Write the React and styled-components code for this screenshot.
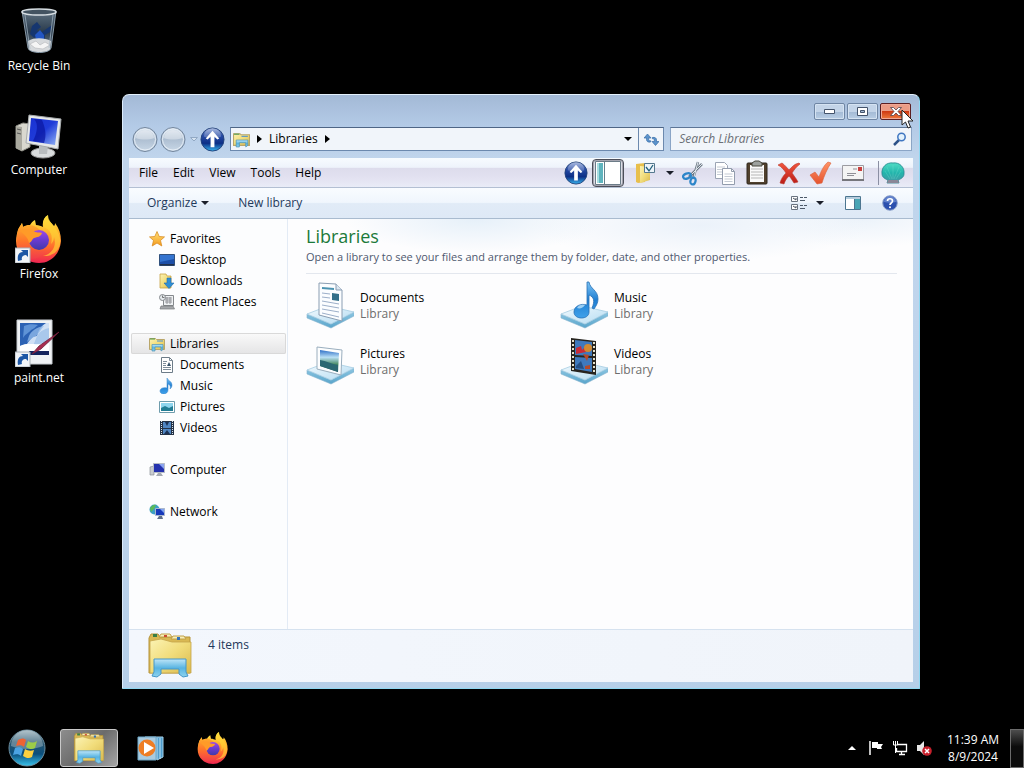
import React from 'react';
import styled, { createGlobalStyle, css } from 'styled-components';

const GlobalStyle = createGlobalStyle`
    * {
        box-sizing: border-box;
    }

    body {
        margin: 0;
        background: #000;
        font-family: "Open Sans", "Noto Sans", sans-serif;
        font-size: 12px;
        line-height: 16px;
        color: #000;
    }

    button, input {
        font: inherit;
        color: inherit;
        border: none;
        background: none;
        padding: 0;
        margin: 0;
    }

    a {
        color: inherit;
        text-decoration: none;
    }

    svg {
        display: block;
        flex: none;
    }
`;

/* ---------- desktop ---------- */

const Desktop = styled.div`
    position: relative;
    display: flex;
    flex-direction: column;
    min-height: 100vh;
    background: #000;
`;

const Shortcuts = styled.nav`
    flex: 1;
    display: flex;
    flex-direction: column;
    align-items: flex-start;
    padding-top: 7px;
    gap: 32px;
`;

const Shortcut = styled.a`
    width: 78px;
    height: 72px;
    display: flex;
    flex-direction: column;
    align-items: center;
    gap: 3px;
    color: #fff;
`;

/* ---------- window frame ---------- */

const Window = styled.main`
    position: absolute;
    inset: 94px 104px 79px 122px;
    display: flex;
    flex-direction: column;
    padding: 0 6px 6px;
    border: 1px solid #e4f1fc;
    border-color: #e4f1fc #8fd8f2 #8fd8f2 #dcebfa;
    border-radius: 7px 7px 1px 1px;
    background: linear-gradient(#a3b9d6, #b3cae6 30px, #c0d5ec 64px, #bfd4ec 300px, #b6cfe8);
`;

const Caption = styled.header`
    flex: none;
    height: 32px;
    display: flex;
    justify-content: flex-end;
    gap: 2px;
    padding: 8px 2px 0 0;
`;

const CaptionButton = styled.button`
    position: relative;
    width: 31px;
    height: 17px;
    display: flex;
    align-items: center;
    justify-content: center;
    border: 1px solid #6f86a4;
    border-radius: 2px;
    box-shadow: inset 0 0 0 1px #d5e3f2;
    background: linear-gradient(#c3d4e8 50%, #a2b9d4 50%, #b9cee5);

    ${({ $close }) => $close && css`
        border-color: #5c1f22;
        box-shadow: inset 0 0 0 1px #f0a795;
        background: linear-gradient(#eb9c86 45%, #d03b14 50%, #ee7b3e);
    `}
`;

const Pointer = styled.svg`
    position: absolute;
    left: 20px;
    top: 5px;
    z-index: 2;
`;

const NavRow = styled.div`
    flex: none;
    height: 31px;
    display: flex;
    align-items: flex-start;
    padding: 0 1px 0 3px;
`;

const RoundButton = styled.button`
    width: 26px;
    height: 25px;
    margin-right: 2px;
`;

const RecentButton = styled.button`
    width: 12px;
    height: 25px;
    display: grid;
    place-items: center;
`;

const AddressBar = styled.div`
    flex: 1;
    height: 24px;
    margin: 0 6px 0 2px;
    display: flex;
    align-items: stretch;
    border: 1px solid #6c89ae;
    border-top-color: #4e6585;
    background: #f1f5fa;
`;

const Crumbs = styled.div`
    flex: 1;
    display: flex;
    align-items: center;
    padding-left: 2px;
    gap: 7px;
`;

const AddressButton = styled.button`
    width: ${({ $wide }) => ($wide ? '25px' : '20px')};
    display: grid;
    place-items: center;
    border-left: ${({ $wide }) => ($wide ? '1px solid #6c89ae' : 'none')};
`;

const SearchBox = styled.label`
    width: 31%;
    height: 24px;
    display: flex;
    align-items: center;
    padding: 0 4px 0 8px;
    border: 1px solid #8ba5c6;
    border-top-color: #5d7596;
    background: #f1f5fa;

    input {
        flex: 1;
        min-width: 0;
        outline: none;
    }

    input::placeholder {
        color: #6b6f76;
        font-style: italic;
        opacity: 1;
    }
`;

/* ---------- bars ---------- */

const MenuBar = styled.div`
    flex: none;
    height: 30px;
    display: flex;
    align-items: center;
    justify-content: space-between;
    padding: 0 4px 0 2px;
    border-bottom: 1px solid #b3bfd3;
    background: linear-gradient(#f7fbff, #eef3fb 32%, #dddcec 36%, #e3e2f1 70%, #e9ecf7);
`;

const Group = styled.div`
    display: flex;
    align-items: center;
    height: 100%;
`;

const MenuButton = styled.button`
    padding: 0 7px 0 8px;
`;

const ToolButton = styled.button`
    width: ${({ $split }) => ($split ? '53px' : '32px')};
    height: 28px;
    display: flex;
    align-items: center;
    justify-content: ${({ $split }) => ($split ? 'space-between' : 'center')};
    padding: ${({ $split }) => ($split ? '0 3px 0 10px' : '0')};

    ${({ $pressed }) => $pressed && css`
        border: 1px solid #4c4e59;
        border-radius: 4px;
        box-shadow: inset 0 0 0 1px #a3a4af;
        background: #dcdde6;
    `}
`;

const Separator = styled.span`
    width: 10px;
    height: 24px;
    margin-right: -2px;
    border-right: 1px solid #8b8fa3;
`;

const CommandBar = styled.div`
    flex: none;
    height: 31px;
    display: flex;
    align-items: center;
    justify-content: space-between;
    padding: 0 15px 0 10px;
    border-bottom: 1px solid #a9bbcf;
    background: linear-gradient(#f9fcff, #f0f6fd 48%, #e1ebf7 52%, #dee9f6);
    color: #1e395b;
`;

const CommandButton = styled.button`
    display: flex;
    align-items: center;
    gap: 4px;
    padding: 0 8px;
    margin-right: 13px;
`;

const IconButton = styled.button`
    display: flex;
    align-items: center;
    gap: 8px;
    margin-left: 21px;
`;

/* ---------- body ---------- */

const Body = styled.div`
    flex: 1;
    min-height: 0;
    display: flex;
    background: #fcfdfe;
`;

const Sidebar = styled.nav`
    flex: none;
    width: 159px;
    display: flex;
    flex-direction: column;
    gap: 21px;
    padding: 9px 1px 0 2px;
    border-right: 1px solid #e3ebf5;
`;

const TreeItem = styled.a`
    height: 21px;
    display: flex;
    align-items: center;
    gap: 5px;
    padding-left: ${({ $child }) => ($child ? '28px' : '18px')};

    ${({ $selected }) => $selected && css`
        border-radius: 2px;
        box-shadow: inset 0 0 0 1px #d9d9d9;
        background: linear-gradient(#fafafa, #e4e4e5);
    `}
`;

const Content = styled.section`
    flex: 1;
    padding: 0 16px 0 18px;
    background:
        radial-gradient(ellipse 130px 34px at 30% 0, #e6f0f9, transparent),
        radial-gradient(ellipse 170px 36px at 66% 6px, #ebf2fa, transparent),
        radial-gradient(ellipse 110px 28px at 92% 0, #ecf3fa, transparent),
        #fdfdfe;
`;

const LibraryHeader = styled.div`
    padding: 5px 0 8px;
    border-bottom: 1px solid #e3e7ee;
    color: #4f596f;

    p {
        margin: 0;
        padding-top: 1px;
        font-size: 11px;
    }
`;

const Title = styled.h1`
    margin: 0;
    font-size: 18px;
    line-height: 24px;
    font-weight: 400;
    color: #1b7a3a;
`;

const LibraryGrid = styled.div`
    display: grid;
    grid-template-columns: repeat(auto-fill, 254px);
    grid-auto-rows: 56px;
    padding-top: 3px;
`;

const LibraryItem = styled.button`
    display: flex;
    align-items: center;
    gap: 6px;
    text-align: left;

    span {
        padding-top: 2px;
    }

    small {
        display: block;
        font-size: 12px;
        color: #6d6d6d;
    }
`;

const Details = styled.footer`
    flex: none;
    height: 53px;
    display: flex;
    gap: 16px;
    padding: 2px 19px;
    border-top: 1px solid #d6e2ef;
    background: linear-gradient(90deg, #f3f7fd, #f0f4fa);
    color: #1e395b;

    p {
        margin: 5px 0 0;
    }
`;

/* ---------- taskbar ---------- */

const Taskbar = styled.footer`
    height: 40px;
    display: flex;
    align-items: center;
    justify-content: space-between;
    color: #fff;
`;

const TaskButton = styled.button`
    width: ${({ $start }) => ($start ? '54px' : '58px')};
    height: 38px;
    margin-right: ${({ $start }) => ($start ? '6px' : '4px')};
    display: grid;
    place-items: center;

    ${({ $active }) => $active && css`
        border: 1px solid #c9c9c9;
        border-radius: 3px;
        background: linear-gradient(135deg, #8d8d8d, #6b6b6b 50%, #a5a5a5);
    `}
`;

const TrayButton = styled.button`
    width: 24px;
    height: 24px;
    display: grid;
    place-items: center;
`;

const Clock = styled.time`
    width: 74px;
    text-align: center;
    line-height: 17px;
`;

const ShowDesktop = styled.button`
    width: 14px;
    height: 39px;
    border: 1px solid #6c6c6c;
    background: linear-gradient(#4d4d4d, #0c0c0c 45%);
`;

/* ---------- icons ---------- */

const Gradient = ({ id, stops, diagonal }) => (
    <linearGradient id={id} x1="0" y1="0" x2={diagonal ? 1 : 0} y2="1">
        {stops.map((color, i) => (
            <stop key={color + i} offset={i / (stops.length - 1)} stopColor={color} />
        ))}
    </linearGradient>
);

const HiddenSvg = styled.svg`
    position: absolute;
`;

const Gradients = () => (
    <HiddenSvg width="0" height="0" aria-hidden="true">
        <defs>
            <Gradient id="folder" stops={['#fbf3b4', '#f1dc7a', '#d9b94e']} diagonal />
            <Gradient id="glass" stops={['#bfe6f8', '#58b4e2', '#8ed3ee']} />
            <Gradient id="flame" stops={['#fff04a', '#ffb52e', '#ff6a2c', '#ee2552']} />
            <Gradient id="flameLeft" stops={['#ffb22c', '#ff762a', '#f23d4a']} />
            <Gradient id="globe" stops={['#a04be8', '#6a3bd0', '#3f3aa8']} />
            <Gradient id="blueBall" stops={['#8fa5d8', '#274ba5', '#0d2f86', '#38b5ef']} />
            <Gradient id="greyBall" stops={['#dbe4ee', '#aebfd2', '#c9d8e7']} />
            <Gradient id="orb" stops={['#9fb4bd', '#28546c', '#0b4f7d', '#38c4ee']} />
            <Gradient id="screen" stops={['#1932d4', '#1f3bd8', '#93b5f6']} diagonal />
            <Gradient id="note" stops={['#7cc4f5', '#1f7ed2', '#3fa1ea']} />
            <Gradient id="tray" stops={['#f3fafe', '#b5dcf2']} diagonal />
            <Gradient id="trayEdge" stops={['#8cc6e2', '#5aa5cb']} />
            <Gradient id="sky" stops={['#2f6fc7', '#b9dff5', '#45875d', '#1e5665']} />
            <Gradient id="bin" stops={['#5f7180', '#2a3b4c', '#71818e']} />
            <Gradient id="star" stops={['#ffe27a', '#f49a1c']} />
            <Gradient id="shell" stops={['#4fdcc4', '#23b5ac', '#4596a4']} />
            <Gradient id="check" stops={['#ff9467', '#e5532e']} />
            <Gradient id="cross" stops={['#f0563f', '#bb1b16']} />
        </defs>
    </HiddenSvg>
);

const Caret = ({ size = 8, color = '#1b1f2a' }) => (
    <svg width={size} height={size / 2} viewBox="0 0 8 4"><path d="M0 0h8L4 4z" fill={color} /></svg>
);

const CrumbArrow = () => (
    <svg width="5" height="8" viewBox="0 0 5 8"><path d="M0 0l5 4-5 4z" fill="#000" /></svg>
);

const ShortcutArrow = () => (
    <g>
        <path d="M0 33h15v15H0z" fill="#f2f5f8" stroke="#a9b1b8" />
        <path d="M3 46c-1-6 1-9 5-9l-2-2h7v7l-2-2c-3 0-5 2-4 5z" fill="#1d57a5" />
    </g>
);

const FirefoxShape = () => (
    <g>
        <path d="M3 15c1-3 3-5 4-7l1 4c2-1 5-2 7-2 2-3 3-4 5-5l1 5c3 0 5 1 7 2C27 7 29 2 33 0c-1 5 3 7 6 11 1-1 1-2 1-3 4 5 6 11 6 18-1 13-10 22-22 22C10 48 1 38 1 26c0-4 1-8 2-11z" fill="url(#flame)" />
        <path d="M3 15c1-3 3-5 4-7l1 4c5-3 9-2 13 0l7 5-4 5-10 2c-1 9 7 15 17 11-4 8-12 10-19 8C3 39 0 25 3 15z" fill="url(#flameLeft)" />
        <circle cx="24" cy="25" r="10" fill="url(#globe)" />
        <path d="M5 16c5-3 9-2 13 0 3 2 7 1 9 2-1 4-5 4-8 5-2 1-2 4-5 5-1-5-4-8-9-12z" fill="#ff9b28" />
        <path d="M29 12c7 3 9 9 7 17 2-2 3-4 3-7 3 9-2 17-11 19 12 1 19-8 17-18C43 12 34 10 33 0c-5 4-6 8-4 12z" fill="#ffd535" opacity=".65" />
    </g>
);

const FirefoxIcon = ({ size = 48, shortcut }) => (
    <svg width={size} height={size} viewBox="0 0 48 48">
        <FirefoxShape />
        {shortcut && <ShortcutArrow />}
    </svg>
);

const RecycleBinIcon = () => (
    <svg width="48" height="48" viewBox="0 0 48 48">
        <path d="M7 4h34l-5 37c-1 6-22 6-23 0z" fill="url(#bin)" stroke="#899aa8" />
        <path d="M17 19l5-4 4 5-4 3 3 5-6 3-4-4zM27 25l10-7-2 7-5 3v8l-7-3z" fill="#16366f" />
        <path d="M20 28l5-5 4 5v7l-7 1z" fill="#2356c4" />
        <path d="M13 34c7-4 17-3 23 0l-1 8c-2 4-19 4-21 0z" fill="#d6d9dc" />
        <path d="M15 37l6-3 4 4 5-3 5 3-7 4-8-1z" fill="#f5f5f5" stroke="#b3b5b8" strokeWidth=".6" />
        <path d="M10 8l5 34M38 8l-4 33" stroke="#a9bac8" opacity=".7" />
        <ellipse cx="24" cy="5" rx="17" ry="3" fill="#435361" stroke="#d6dde2" strokeWidth="1.5" />
    </svg>
);

const ComputerIcon = () => (
    <svg width="48" height="48" viewBox="0 0 48 48">
        <path d="M1 15l7-3 7 1v23l-8 4-6-3z" fill="#d9d8cf" stroke="#8e8e86" />
        <path d="M1 15l6 1v24l-6-3z" fill="#aaa99f" />
        <path d="M2 18l4 1m-4 3l4 1" stroke="#555" />
        <ellipse cx="28" cy="42" rx="12" ry="5" fill="#d9dcdd" stroke="#999" />
        <path d="M24 33l9 2-1 8h-8z" fill="#b8bcbe" />
        <path d="M14 4l32 4-3 30-32-6z" fill="#e7e9e9" stroke="#a7abad" />
        <path d="M16 7l27 3-3 24-26-4z" fill="url(#screen)" />
        <path d="M19 8c5 5 3 14-1 22l11 2c3-8 1-16-2-23z" fill="#0b18a4" opacity=".75" />
    </svg>
);

const PaintIcon = () => (
    <svg width="48" height="48" viewBox="0 0 48 48">
        <path d="M2 1h35v44H2z" fill="#f0f2f4" stroke="#c6cbd0" />
        <path d="M5 4h29v32H5z" fill="#cfe0f5" />
        <path d="M5 4h26c-5 3-8 8-9 13-5 0-8 5-10 8l-7 2z" fill="#2c62b4" />
        <path d="M9 7c5-2 9-2 14-1-3 2-4 4-7 5-2 3-6 4-8 8z" fill="#5f93d6" />
        <path d="M14 17c2-5 8-9 15-10-4 4-5 8-8 10-3 1-6 4-9 6z" fill="#8fb8e8" opacity=".8" />
        <path d="M22 17c4-6 8-7 12-8v13l-16 5z" fill="#a9c8ec" />
        <path d="M5 27c8-4 15 0 29-3v12H5z" fill="#fff" />
        <path d="M14 32h20v4H14z" fill="#15235c" />
        <path d="M44 13L26 30l-9 5 7-8z" fill="#a82c4f" stroke="#70213c" strokeWidth=".8" />
        <ShortcutArrow />
    </svg>
);

const ExplorerIcon = ({ width = 44, height = 46 }) => (
    <svg width={width} height={height} viewBox="0 0 44 46">
        <path d="M1 6l2-4h7l2 3h30v36H1z" fill="#d9b853" stroke="#b59338" />
        <path d="M11 5l2-3h9l2 3zM23 7l2-3h11l2 3z" fill="#f8efb9" stroke="#c0a04a" />
        <path d="M5 2h4v3H5z" fill="#397f46" />
        <path d="M16 3h3v2h-3z" fill="#cc4932" />
        <path d="M29 5h3v3h-3z" fill="#3271b8" />
        <path d="M2 9l11-2 11 3h19v31H2z" fill="url(#folder)" stroke="#c4a349" strokeWidth=".8" />
        <path d="M6 27h32v13l2 4-5 1-4-3v-5H13v5l-4 3-5-1 2-4z" fill="url(#glass)" stroke="#4697c8" />
    </svg>
);

const LibrariesIcon = ({ size = 16 }) => (
    <svg width={size} height={size} viewBox="0 0 16 16">
        <path d="M.5 2.5h6l1 1h8v10H.5z" fill="url(#folder)" stroke="#b9a66a" />
        <path d="M1 3h5" stroke="#4b9a50" />
        <path d="M8 5h6" stroke="#4a90cf" />
        <path d="M3 8.500h11v5l-2 1.500v-4H6v4H3z" fill="url(#glass)" stroke="#4c93b6" strokeWidth=".7" />
    </svg>
);

const UpIcon = ({ size = 25 }) => (
    <svg width={size} height={size} viewBox="0 0 26 26">
        <circle cx="13" cy="13" r="12" fill="url(#blueBall)" stroke="#24437c" />
        <path d="M4 10a9 9 0 0118 0c-5 2-13 2-18 0z" fill="#fff" opacity=".25" />
        <path d="M13 4l7 8-2 1-3-3v11h-4V10l-3 3-2-1z" fill="#fff" />
    </svg>
);

const GreyBall = () => (
    <svg width="26" height="25" viewBox="0 0 26 25">
        <circle cx="13" cy="12.500" r="12" fill="url(#greyBall)" stroke="#72859c" />
        <circle cx="13" cy="12.500" r="10.500" fill="none" stroke="#e6eef6" />
        <path d="M4 11a9 8 0 0118 0c-5 2-13 2-18 0z" fill="#fff" opacity=".35" />
    </svg>
);

const RefreshIcon = () => (
    <svg width="15" height="15" viewBox="0 0 15 15">
        <path d="M0 6l3.500-4L7 6H4.700v1.500c0 1 .8 1.300 2 1.300V10C4 10.500 2.500 9.500 2.500 7.500V6z" fill="#5b93cc" stroke="#3a6ea8" strokeWidth=".7" />
        <path d="M15 9.500l-3.500 4-3.500-4h2.300V8c0-1-.8-1.300-2-1.300V5.500c2.700-.5 4.200.5 4.200 2.500v1.500z" fill="#5b93cc" stroke="#3a6ea8" strokeWidth=".7" />
    </svg>
);

const SearchIcon = () => (
    <svg width="14" height="14" viewBox="0 0 14 14" fill="none">
        <path d="M6 8l-5 5" stroke="#2d5288" strokeWidth="2.500" />
        <circle cx="8.500" cy="5" r="3.700" fill="#e3f2fd" stroke="#3f76c1" strokeWidth="1.500" />
    </svg>
);

const PaneIcon = () => (
    <svg width="26" height="24" viewBox="0 0 26 24">
        <path d="M.5.5h25v23H.5z" fill="#fff" stroke="#6c7c88" />
        <path d="M2 2h6v20H2z" fill="#5fb4be" />
        <path d="M2 2h2v20H2z" fill="#a7dce0" />
        <path d="M9.500 1v22" stroke="#64808c" />
    </svg>
);

const FolderOptionsIcon = () => (
    <svg width="22" height="24" viewBox="0 0 22 24">
        <path d="M2 3l9-1v19l-7 1-2-1z" fill="#e8bf4c" />
        <path d="M6 5l10 1v13L6 22z" fill="url(#folder)" />
        <path d="M10.500 2.500h10v9h-10z" fill="#edf4fa" stroke="#55788e" />
        <path d="M12 6l3 4 4-6" fill="none" stroke="#1f5f7b" strokeWidth="1.300" />
    </svg>
);

const ScissorsIcon = () => (
    <svg width="24" height="26" viewBox="0 0 24 26" fill="none">
        <path d="M8 17L21 4M12 19l5-17" stroke="#6e7a86" strokeWidth="2.500" />
        <path d="M9 16L21 4M13 17l4-15" stroke="#dfe6ec" />
        <ellipse cx="6" cy="16" rx="4" ry="2.500" transform="rotate(-20 6 16)" stroke="#2d86c9" strokeWidth="2.200" />
        <ellipse cx="12" cy="21" rx="2.500" ry="3.500" transform="rotate(15 12 21)" stroke="#2d86c9" strokeWidth="2.200" />
    </svg>
);

const CopyIcon = () => (
    <svg width="22" height="24" viewBox="0 0 22 24">
        <path d="M1.500 1.500h9l3 3v13h-12z" fill="#fff" stroke="#9ba4b4" />
        <path d="M3 6h8M3 8.500h8M3 11h8M3 13.500h8" stroke="#c5cbd5" />
        <path d="M8.500 7.500h9l3 3v13h-12z" fill="#fff" stroke="#929cad" />
        <path d="M17.500 7.500v3h3" fill="none" stroke="#929cad" />
        <path d="M10.500 13h8M10.500 15.500h8M10.500 18h8M10.500 20.500h8" stroke="#c5cbd5" />
    </svg>
);

const ClipboardIcon = () => (
    <svg width="22" height="25" viewBox="0 0 22 25">
        <rect x="1" y="3" width="20" height="21" rx="1" fill="#50402d" stroke="#2e261c" />
        <path d="M4 5h14v17H4z" fill="#fafafa" />
        <path d="M5 9h12M5 12h12M5 15h12M5 18h12" stroke="#b6b6b6" />
        <path d="M6 3l3-2h4l3 2v3H6z" fill="#9da19e" stroke="#48483f" />
    </svg>
);

const DeleteIcon = () => (
    <svg width="24" height="24" viewBox="0 0 24 24">
        <path d="M1 4l4-2c3 2 5 5 7 7 3-3 5-6 10-7l1 1c-4 3-6 6-8 9 2 3 4 5 6 9l-4 1c-2-3-3-5-5-7-3 3-4 5-5 8l-4-1c1-4 3-7 6-10-2-3-4-6-8-8z" fill="url(#cross)" stroke="#b93a2e" strokeWidth=".6" />
    </svg>
);

const CheckIcon = () => (
    <svg width="24" height="24" viewBox="0 0 24 24">
        <path d="M1 14l5-3 4 5c2-6 5-12 9-15l3 1c-4 6-7 13-9 20l-5 1z" fill="url(#check)" stroke="#d9623c" strokeWidth=".6" />
    </svg>
);

const MailIcon = () => (
    <svg width="24" height="20" viewBox="0 0 24 20">
        <path d="M1.500 2.500h21v14h-21z" fill="#f4f4f4" stroke="#9c9ca2" />
        <path d="M1 17h22" stroke="#76767c" strokeWidth="2" />
        <path d="M17 4h4v4h-4z" fill="#c8413f" />
        <path d="M6 10.500h9M6 12.500h7M12 6h4" stroke="#8f8f96" />
    </svg>
);

const ShellIcon = () => (
    <svg width="24" height="22" viewBox="0 0 24 22">
        <path d="M12 1C18 0 24 5 23 12c0 3-3 5-6 6l1 3H6l1-3c-3-1-6-3-6-6C0 5 6 0 12 1z" fill="url(#shell)" stroke="#2b8791" strokeWidth=".8" />
        <path d="M12 17V3M11 17L6 5M13 17l5-12M9 17L4 9M15 17l5-8" stroke="#8beddc" strokeWidth=".7" opacity=".35" />
        <path d="M7 18h10l1 3H6z" fill="#8a8797" />
    </svg>
);

const ViewIcon = () => (
    <svg width="17" height="16" viewBox="0 0 17 16">
        <path d="M.5 1.500h6v5h-6zM.5 9.500h6v5h-6z" fill="#fff" stroke="#68727f" />
        <path d="M2 3l3 2M2 11l3 2M5 3v2M5 11v2" stroke="#46505e" />
        <path d="M9 2.500h3m1 0h3M9 5.500h5M9 10.500h3m1 0h3M9 13.500h5" stroke="#4d5968" />
    </svg>
);

const PreviewIcon = () => (
    <svg width="16" height="14" viewBox="0 0 16 14">
        <path d="M.5.5h15v13H.5z" fill="#fff" stroke="#4d7690" />
        <path d="M1 1h14v2H1z" fill="#b6cddd" />
        <path d="M10 3h5v10h-5z" fill="#4ba6b5" />
        <path d="M9.500 3v10" stroke="#4d7690" />
    </svg>
);

const HelpIcon = () => (
    <svg width="16" height="16" viewBox="0 0 16 16">
        <circle cx="8" cy="8" r="7.300" fill="#2c50ae" stroke="#8fa3cb" />
        <path d="M2 7a6 6 0 0112 0c-4 1-8 1-12 0z" fill="#7895d7" opacity=".7" />
        <path d="M5.500 6c0-3 5-3 5 0 0 2-2.500 2-2.500 4" fill="none" stroke="#fff" strokeWidth="1.700" />
        <circle cx="8" cy="12.300" r="1" fill="#fff" />
    </svg>
);

// 16px drawings of the navigation tree
const smallIcons = {
    star: (
        <path d="M8 .5l2.200 5 5.300.4-4 3.600 1.300 5.500L8 12l-4.800 3 1.300-5.500-4-3.600 5.300-.4z" fill="url(#star)" stroke="#d98e26" strokeWidth=".8" />
    ),
    desktop: (
        <>
            <path d="M.5 2.500h15v11H.5z" fill="#1d4fa8" stroke="#31517d" />
            <path d="M1 3h14v4L1 10z" fill="#3474cf" />
            <path d="M1 12h14v1.500H1z" fill="#23324d" />
        </>
    ),
    downloads: (
        <>
            <path d="M1 1h6l1 2h4v12H1z" fill="url(#folder)" stroke="#c8a245" strokeWidth=".8" />
            <path d="M8 5h4v5h3l-5 5.500L5 10h3z" fill="#2e8fd6" stroke="#216ba7" strokeWidth=".6" />
        </>
    ),
    recent: (
        <>
            <path d="M4.500 1.500h10v10h-10z" fill="#eef1f3" stroke="#85898d" />
            <path d="M6 4h7M6 6h7M6 8h7M8 3v7M11 3v7" stroke="#83878c" strokeWidth=".8" />
            <path d="M2 12h12l1.500 3H1z" fill="#a5a8ab" stroke="#77797c" strokeWidth=".7" />
            <circle cx="3.500" cy="3.500" r="3" fill="#e5eaed" stroke="#85898d" />
            <path d="M3.500 1.500v2h2" fill="none" stroke="#555" strokeWidth=".8" />
        </>
    ),
    documents: (
        <>
            <path d="M2.500.5h8l3 3v12h-11z" fill="#fff" stroke="#6d7c88" />
            <path d="M10.500.5v3h3M4 4.500h4M4 6.500h3M4 8.500h3M4 10.500h8M4 12.500h8" fill="none" stroke="#7e8d99" />
            <path d="M8 9l2-4 2 4z" fill="#38536b" />
        </>
    ),
    music: (
        <path d="M8 0c1 3 5 3 5 7 0 2-1 3-2 4 1-3 0-4-2-5v6c0 5-8 5-8 1 0-3 4-4 7-3z" fill="url(#note)" stroke="#3885c8" strokeWidth=".5" />
    ),
    pictures: (
        <>
            <path d="M.5 2.500h15v11H.5z" fill="#fff" stroke="#6e9cac" />
            <path d="M2 4h12v8H2z" fill="#8fd5ee" />
            <path d="M2 9l4-2 4 2 4-2v5H2z" fill="#227d94" />
        </>
    ),
    videos: (
        <>
            <path d="M1 1h14v14H1z" fill="#253347" />
            <path d="M4 2h8v6H4zM4 9h8v5H4z" fill="#5086c2" />
            <path d="M2.500 1v14M13.500 1v14" stroke="#d9e2e9" strokeDasharray="1 1" />
            <path d="M6 2l2 4 2-4M5 14l3-4 3 4" fill="#1c3153" />
        </>
    ),
    computer: (
        <>
            <path d="M1 5l4-1v9H1z" fill="#c9ccd0" stroke="#8b9098" strokeWidth=".7" />
            <path d="M4.500 1.500h11v9h-11z" fill="#2432ae" stroke="#b6bcc6" />
            <path d="M10 2h5v5z" fill="#8aa3f0" />
            <path d="M9 11h3l2 3H7z" fill="#a5aab2" />
        </>
    ),
    network: (
        <>
            <circle cx="5.500" cy="5.500" r="5" fill="#3d9fc4" />
            <path d="M1 4c2-3 5-4 6-3L5 5 2 8z" fill="#5bba58" />
            <path d="M6.500 4.500h9v7h-9z" fill="#1638ba" stroke="#aab7cd" />
            <path d="M11 5h4v4z" fill="#7fa2f0" />
            <path d="M10 12h3l1 3H8z" fill="#5f6f88" />
        </>
    ),
};

const SmallIcon = ({ name }) => (
    <svg width="16" height="16" viewBox="0 0 16 16">{smallIcons[name]}</svg>
);

// what stands on the blue tray of each library
const libraryArt = {
    documents: (
        <>
            <path d="M13 2l17 1 6 6v31l-23-6z" fill="#fbfdff" stroke="#8a9db2" />
            <path d="M30 3v6h6" fill="#dbe6f0" stroke="#8a9db2" />
            <path d="M16 7l12 1" stroke="#4c93b1" strokeWidth="2" />
            <path d="M16 12l8 1M16 16l8 1M16 20l17 3M16 24l17 3M16 28l17 3M16 32l17 4" stroke="#9cafc9" />
            <path d="M26 12l7 1v7l-7-1z" fill="#34708a" />
        </>
    ),
    music: (
        <>
            <path d="M27 1h2c1 7 9 8 9 17 0 4-2 7-4 10l-2-1c3-7 2-11-3-13v17c0 8-15 8-15 0 0-6 7-9 13-7z" fill="url(#note)" stroke="#2870b4" strokeWidth=".8" />
            <path d="M17 27c1-3 5-4 8-3-2 3-5 4-8 3z" fill="#b8e0fa" opacity=".8" />
        </>
    ),
    pictures: (
        <>
            <path d="M11 10l25 3-1 25-24-6z" fill="#fcfdfe" stroke="#9aaebe" />
            <path d="M14 13l19 3-1 19-18-6z" fill="url(#sky)" />
            <path d="M14 23c6 1 12 4 18 5v7l-18-6z" fill="#2c6872" />
        </>
    ),
    videos: (
        <>
            <path d="M11 1l25 3v34l-25-4z" fill="#27241f" />
            <path d="M15 3l17 2v14l-17-1zM15 20l17 1v14l-17-3z" fill="#3f79bd" />
            <path d="M16 11l5-2 1 4 3-3 1 5-10 2z" fill="#c92b37" />
            <circle cx="28" cy="11" r="4" fill="#d28a31" />
            <path d="M23 17l6 1-2 6zM25 29l5-1v4h-5z" fill="#b64a2a" />
            <path d="M16 29l5-5 3 8-8-1z" fill="#254f84" />
            <path d="M13 3v31M34 5v32" stroke="#e6e3cf" strokeWidth="2" strokeDasharray="2 2" />
        </>
    ),
};

const LibraryIcon = ({ name }) => (
    <svg width="48" height="48" viewBox="0 0 48 48">
        <path d="M1 33v4l24 10 23-12v-4L25 43z" fill="url(#trayEdge)" stroke="#86b4ce" strokeWidth=".6" />
        <path d="M1 33l21-8 26 6-23 12z" fill="url(#tray)" stroke="#a6cde2" strokeWidth=".8" />
        {libraryArt[name]}
    </svg>
);

const StartOrb = () => (
    <svg width="38" height="38" viewBox="0 0 38 38">
        <circle cx="19" cy="19" r="18" fill="url(#orb)" stroke="#6d8e9f" />
        <path d="M3 17a16 16 0 0132 0c-9 4-23 4-32 0z" fill="#d9e6ea" opacity=".35" />
        <path d="M10 11c3-2 6-2 8 0l-2 7c-2-2-5-2-8-1z" fill="#ee6333" />
        <path d="M20 12c3 2 6 2 9 0l-2 7c-3 2-6 1-9-1z" fill="#9ccc48" />
        <path d="M7 19c3-1 6-1 8 1l-2 7c-2-2-5-2-8-1z" fill="#4ba3e3" />
        <path d="M17 20c3 2 6 2 9 1l-2 7c-3 2-6 1-9-1z" fill="#fbd03f" />
    </svg>
);

const MediaPlayerIcon = () => (
    <svg width="28" height="28" viewBox="0 0 28 28">
        <path d="M8 3h18v20l-6 3z" fill="#4f9ccc" stroke="#a6d3eb" />
        <path d="M23 4v21M20 4v21" stroke="#bfe2f3" />
        <path d="M1 3h18v23H1z" fill="#a9cbe0" stroke="#6fa9ca" />
        <circle cx="10" cy="14" r="8.500" fill="#ee7d24" />
        <path d="M7 8l10 6-10 6z" fill="#fff" />
    </svg>
);

const FlagIcon = () => (
    <svg width="16" height="16" viewBox="0 0 16 16">
        <path d="M2 1v14" stroke="#fff" strokeWidth="1.500" />
        <path d="M4 2h6v2h5l-2 3 1 2H9V8H4z" fill="#fff" />
    </svg>
);

const NetworkIcon = () => (
    <svg width="16" height="16" viewBox="0 0 16 16" fill="none" stroke="#fff">
        <path d="M5 4.500h9.500v7H4.500V8M7 14.500h6M9.500 12v2" strokeWidth="1.300" />
        <path d="M1.500 1v4h4V1M3.500 1v12" />
    </svg>
);

const MutedIcon = () => (
    <svg width="16" height="16" viewBox="0 0 16 16">
        <path d="M1 5h3l4-4v14l-4-4H1z" fill="#e8e8e8" />
        <circle cx="11" cy="11" r="4.800" fill="#c8202c" />
        <path d="M9 9l4 4m0-4l-4 4" stroke="#fff" strokeWidth="1.500" />
    </svg>
);

/* ---------- data ---------- */

const shortcuts = [
    { label: 'Recycle Bin', icon: <RecycleBinIcon /> },
    { label: 'Computer', icon: <ComputerIcon /> },
    { label: 'Firefox', icon: <FirefoxIcon shortcut /> },
    { label: 'paint.net', icon: <PaintIcon /> },
];

const tree = [
    {
        label: 'Favorites',
        icon: 'star',
        children: [
            { label: 'Desktop', icon: 'desktop' },
            { label: 'Downloads', icon: 'downloads' },
            { label: 'Recent Places', icon: 'recent' },
        ],
    },
    {
        label: 'Libraries',
        selected: true,
        children: [
            { label: 'Documents', icon: 'documents' },
            { label: 'Music', icon: 'music' },
            { label: 'Pictures', icon: 'pictures' },
            { label: 'Videos', icon: 'videos' },
        ],
    },
    { label: 'Computer', icon: 'computer', children: [] },
    { label: 'Network', icon: 'network', children: [] },
];

const tools = [
    { label: 'Cut', icon: <ScissorsIcon /> },
    { label: 'Copy', icon: <CopyIcon /> },
    { label: 'Paste', icon: <ClipboardIcon /> },
    { label: 'Delete', icon: <DeleteIcon /> },
    { label: 'Rename', icon: <CheckIcon /> },
    { label: 'Email', icon: <MailIcon /> },
];

const libraries = ['Documents', 'Music', 'Pictures', 'Videos'];

/* ---------- parts ---------- */

const TitleBar = () => (
    <Caption>
        <CaptionButton aria-label="Minimize">
            <svg width="11" height="5" viewBox="0 0 11 5"><path d="M.5.5h10v4H.5z" fill="#fff" stroke="#43536b" /></svg>
        </CaptionButton>
        <CaptionButton aria-label="Maximize">
            <svg width="11" height="9" viewBox="0 0 11 9">
                <path d="M.5.5h10v8H.5z" fill="#fff" stroke="#43536b" />
                <path d="M3.500 3.500h4v2h-4z" fill="#a2b9d4" stroke="#43536b" />
            </svg>
        </CaptionButton>
        <CaptionButton $close aria-label="Close">
            <svg width="12" height="9" viewBox="0 0 12 9">
                <path d="M.5.5h3L6 3 8.500.5h3L8 4.500l3.500 4h-3L6 6 3.500 8.500h-3l3.500-4z" fill="#fff" stroke="#53434b" strokeWidth=".8" />
            </svg>
            <Pointer width="13" height="20" viewBox="0 0 13 20">
                <path d="M1 1v15l3.500-3 2.500 6 2.500-1L7 12h5z" fill="#fff" stroke="#222" />
            </Pointer>
        </CaptionButton>
    </Caption>
);

const Navigation = () => (
    <NavRow>
        <RoundButton aria-label="Back"><GreyBall /></RoundButton>
        <RoundButton aria-label="Forward"><GreyBall /></RoundButton>
        <RecentButton aria-label="Recent pages">
            <svg width="8" height="5" viewBox="0 0 8 5"><path d="M.5.5h7L4 4z" fill="#d5e3f1" stroke="#92a9c4" /></svg>
        </RecentButton>
        <RoundButton aria-label="Up"><UpIcon /></RoundButton>
        <AddressBar>
            <Crumbs>
                <LibrariesIcon size={17} />
                <CrumbArrow />
                <button>Libraries</button>
                <CrumbArrow />
            </Crumbs>
            <AddressButton aria-label="Previous locations"><Caret color="#000" /></AddressButton>
            <AddressButton $wide aria-label="Refresh"><RefreshIcon /></AddressButton>
        </AddressBar>
        <SearchBox>
            <input type="text" placeholder="Search Libraries" aria-label="Search Libraries" />
            <SearchIcon />
        </SearchBox>
    </NavRow>
);

const Menu = () => (
    <MenuBar>
        <Group>
            {['File', 'Edit', 'View', 'Tools', 'Help'].map(label => (
                <MenuButton key={label}>{label}</MenuButton>
            ))}
        </Group>
        <Group>
            <ToolButton aria-label="Up"><UpIcon size={24} /></ToolButton>
            <ToolButton $pressed aria-label="Navigation pane"><PaneIcon /></ToolButton>
            <ToolButton $split aria-label="Folder options"><FolderOptionsIcon /><Caret /></ToolButton>
            {tools.map(tool => (
                <ToolButton key={tool.label} aria-label={tool.label}>{tool.icon}</ToolButton>
            ))}
            <Separator />
            <ToolButton aria-label="Classic Shell"><ShellIcon /></ToolButton>
        </Group>
    </MenuBar>
);

const Commands = () => (
    <CommandBar>
        <Group>
            <CommandButton>Organize <Caret /></CommandButton>
            <CommandButton>New library</CommandButton>
        </Group>
        <Group>
            <IconButton aria-label="Change view"><ViewIcon /><Caret /></IconButton>
            <IconButton aria-label="Preview pane"><PreviewIcon /></IconButton>
            <IconButton aria-label="Help"><HelpIcon /></IconButton>
        </Group>
    </CommandBar>
);

const Tree = () => (
    <Sidebar>
        {tree.map(group => (
            <div key={group.label}>
                <TreeItem href="#" $selected={group.selected}>
                    {group.icon ? <SmallIcon name={group.icon} /> : <LibrariesIcon />}
                    {group.label}
                </TreeItem>
                {group.children.map(item => (
                    <TreeItem key={item.label} href="#" $child>
                        <SmallIcon name={item.icon} />
                        {item.label}
                    </TreeItem>
                ))}
            </div>
        ))}
    </Sidebar>
);

const App = () => {
    return (
        <Desktop>
            <GlobalStyle />
            <Gradients />

            <Shortcuts>
                {shortcuts.map(item => (
                    <Shortcut key={item.label} href="#">
                        {item.icon}
                        {item.label}
                    </Shortcut>
                ))}
            </Shortcuts>

            <Window>
                <TitleBar />
                <Navigation />
                <Menu />
                <Commands />
                <Body>
                    <Tree />
                    <Content>
                        <LibraryHeader>
                            <Title>Libraries</Title>
                            <p>Open a library to see your files and arrange them by folder, date, and other properties.</p>
                        </LibraryHeader>
                        <LibraryGrid>
                            {libraries.map(name => (
                                <LibraryItem key={name}>
                                    <LibraryIcon name={name.toLowerCase()} />
                                    <span>{name}<small>Library</small></span>
                                </LibraryItem>
                            ))}
                        </LibraryGrid>
                    </Content>
                </Body>
                <Details>
                    <ExplorerIcon />
                    <p>4 items</p>
                </Details>
            </Window>

            <Taskbar>
                <Group>
                    <TaskButton $start aria-label="Start"><StartOrb /></TaskButton>
                    <TaskButton $active aria-label="Windows Explorer"><ExplorerIcon width={34} height={32} /></TaskButton>
                    <TaskButton aria-label="Media Player"><MediaPlayerIcon /></TaskButton>
                    <TaskButton aria-label="Firefox"><FirefoxIcon size={32} /></TaskButton>
                </Group>
                <Group>
                    <TrayButton aria-label="Show hidden icons">
                        <svg width="8" height="4" viewBox="0 0 8 4"><path d="M0 4h8L4 0z" fill="#fff" /></svg>
                    </TrayButton>
                    <TrayButton aria-label="Action Center"><FlagIcon /></TrayButton>
                    <TrayButton aria-label="Network"><NetworkIcon /></TrayButton>
                    <TrayButton aria-label="Volume"><MutedIcon /></TrayButton>
                    <Clock>11:39 AM<br />8/9/2024</Clock>
                    <ShowDesktop aria-label="Show desktop" />
                </Group>
            </Taskbar>
        </Desktop>
    );
};

export default App;
